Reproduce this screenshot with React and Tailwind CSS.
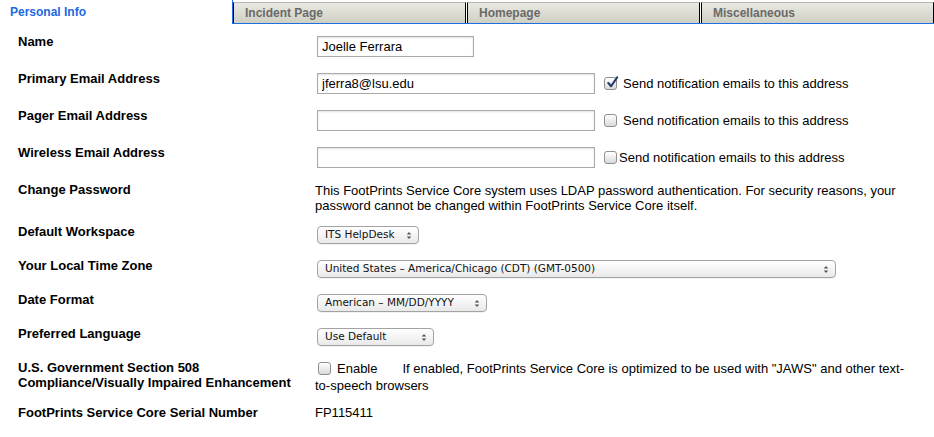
import { useState } from 'react';

function Tab({ label }) {
  return (
    <div className="flex-1 ml-px mt-[2px] h-[21px] flex items-center pl-[11px] border-t border-[#b5b5ad] border-l border-r border-l-black border-r-black bg-linear-to-b from-[#e9e9e2] to-[#cfcfc3] text-[12px] font-bold text-[#6a6a6a]">
      {label}
    </div>
  );
}

function Check({ checked, onChange }) {
  return (
    <span
      onClick={onChange}
      className="relative inline-block w-[13px] h-[13px] shrink-0 rounded-[3px] border border-[#8f8f8f] bg-linear-to-b from-white to-[#dadada] shadow-[inset_0_1px_0_#fff]"
    >
      {checked && (
        <svg viewBox="0 0 14 14" className="absolute left-[1px] top-[-2px] w-[13px] h-[13px]">
          <path d="M2.5 7.5 L5.5 11 L12 1.5" fill="none" stroke="#25386a" strokeWidth="2.2" strokeLinecap="round" strokeLinejoin="round" />
        </svg>
      )}
    </span>
  );
}

function Select({ value, w }) {
  return (
    <div className="flex pt-[12px] pl-[2px]">
      <div className={`flex items-center justify-between h-[18px] ${w} rounded-[4px] border border-[#a3a3a3] bg-linear-to-b from-white to-[#e9e9e9] shadow-[0_1px_0_rgba(0,0,0,0.05)] pl-[7px] pr-[6px] text-[10.5px] text-[#111] font-['DejaVu_Sans',sans-serif]`}>
        <span>{value}</span>
        <svg viewBox="0 0 6 10" className="w-[6px] h-[9px]">
          <path d="M3 1 L5.5 4 H0.5 Z" fill="#555" />
          <path d="M3 9 L5.5 6 H0.5 Z" fill="#555" />
        </svg>
      </div>
    </div>
  );
}

function Row({ label, h, children }) {
  return (
    <div className={`flex ${h}`}>
      <div className="w-[297px] shrink-0 pt-[10px] text-[13px] leading-[15px] font-bold text-black">{label}</div>
      <div className="flex-1">{children}</div>
    </div>
  );
}

function TextInput({ value, w }) {
  return (
    <div className="flex pt-[12px] pl-[2px]">
      <input
        defaultValue={value}
        className={`block ${w} h-[21px] border border-[#a9a9a9] shadow-[inset_0_1px_2px_rgba(0,0,0,0.12)] px-[4px] text-[13px] text-black outline-none`}
      />
    </div>
  );
}

function NotifyRow({ checked, onChange, gap }) {
  return (
    <div className="flex items-center">
      <TextInput value="" w="w-[278px]" />
      <div className="flex items-center pt-[12px] ml-[9px] text-[13px]">
        <Check checked={checked} onChange={onChange} />
        <span className={gap}>Send notification emails to this address</span>
      </div>
    </div>
  );
}

export default function App() {
  const [notify, setNotify] = useState([true, false, false]);
  const toggle = (i) => setNotify(notify.map((v, j) => (j === i ? !v : v)));
  const [enable, setEnable] = useState(false);

  return (
    <div className="w-[934px] h-[437px] overflow-hidden bg-white font-['Liberation_Sans',Arial,sans-serif] text-black">
      <div className="flex h-[24px]">
        <div className="w-[233px] shrink-0 border-r border-[#1f6fe0] flex items-center pl-[10px] text-[12px] font-bold text-[#1b69e2]">
          Personal Info
        </div>
        <div className="flex-1 flex border-b border-[#1f6fe0] -ml-px">
          <Tab label="Incident Page" />
          <Tab label="Homepage" />
          <Tab label="Miscellaneous" />
        </div>
      </div>

      <div className="pl-[18px]">
        <Row label="Name" h="h-[37px]">
          <TextInput value="Joelle Ferrara" w="w-[157px]" />
        </Row>
        <Row label="Primary Email Address" h="h-[37px]">
          <div className="flex items-center">
            <TextInput value="jferra8@lsu.edu" w="w-[278px]" />
            <div className="flex items-center pt-[12px] ml-[9px] text-[13px]">
              <Check checked={notify[0]} onChange={() => toggle(0)} />
              <span className="ml-[6px]">Send notification emails to this address</span>
            </div>
          </div>
        </Row>
        <Row label="Pager Email Address" h="h-[37px]">
          <NotifyRow checked={notify[1]} onChange={() => toggle(1)} gap="ml-[6px]" />
        </Row>
        <Row label="Wireless Email Address" h="h-[37px]">
          <NotifyRow checked={notify[2]} onChange={() => toggle(2)} gap="ml-[2px]" />
        </Row>
        <Row label="Change Password" h="h-[42px]">
          <div className="pt-[11px] text-[13px] leading-[15px]">
            This FootPrints Service Core system uses LDAP password authentication. For security reasons, your
            <br />
            password cannot be changed within FootPrints Service Core itself.
          </div>
        </Row>
        <Row label="Default Workspace" h="h-[34px]">
          <Select value="ITS HelpDesk" w="w-[102px]" />
        </Row>
        <Row label="Your Local Time Zone" h="h-[34px]">
          <Select value="United States – America/Chicago (CDT) (GMT-0500)" w="w-[519px]" />
        </Row>
        <Row label="Date Format" h="h-[34px]">
          <Select value="American – MM/DD/YYYY" w="w-[170px]" />
        </Row>
        <Row label="Preferred Language" h="h-[34px]">
          <Select value="Use Default" w="w-[117px]" />
        </Row>
        <Row
          label={
            <>
              U.S. Government Section 508
              <br />
              Compliance/Visually Impaired Enhancement
            </>
          }
          h="h-[45px]"
        >
          <div className="pt-[10px] text-[13px] leading-[17px]">
            <div className="flex items-center">
              <span className="flex ml-[3px]">
                <Check checked={enable} onChange={() => setEnable(!enable)} />
              </span>
              <span className="ml-[6px]">Enable</span>
              <span className="ml-[25px]">
                If enabled, FootPrints Service Core is optimized to be used with "JAWS" and other text-
              </span>
            </div>
            <div>to-speech browsers</div>
          </div>
        </Row>
        <Row label="FootPrints Service Core Serial Number" h="h-[42px]">
          <div className="pt-[10px] text-[13px] leading-[15px]">FP115411</div>
        </Row>
      </div>
    </div>
  );
}
